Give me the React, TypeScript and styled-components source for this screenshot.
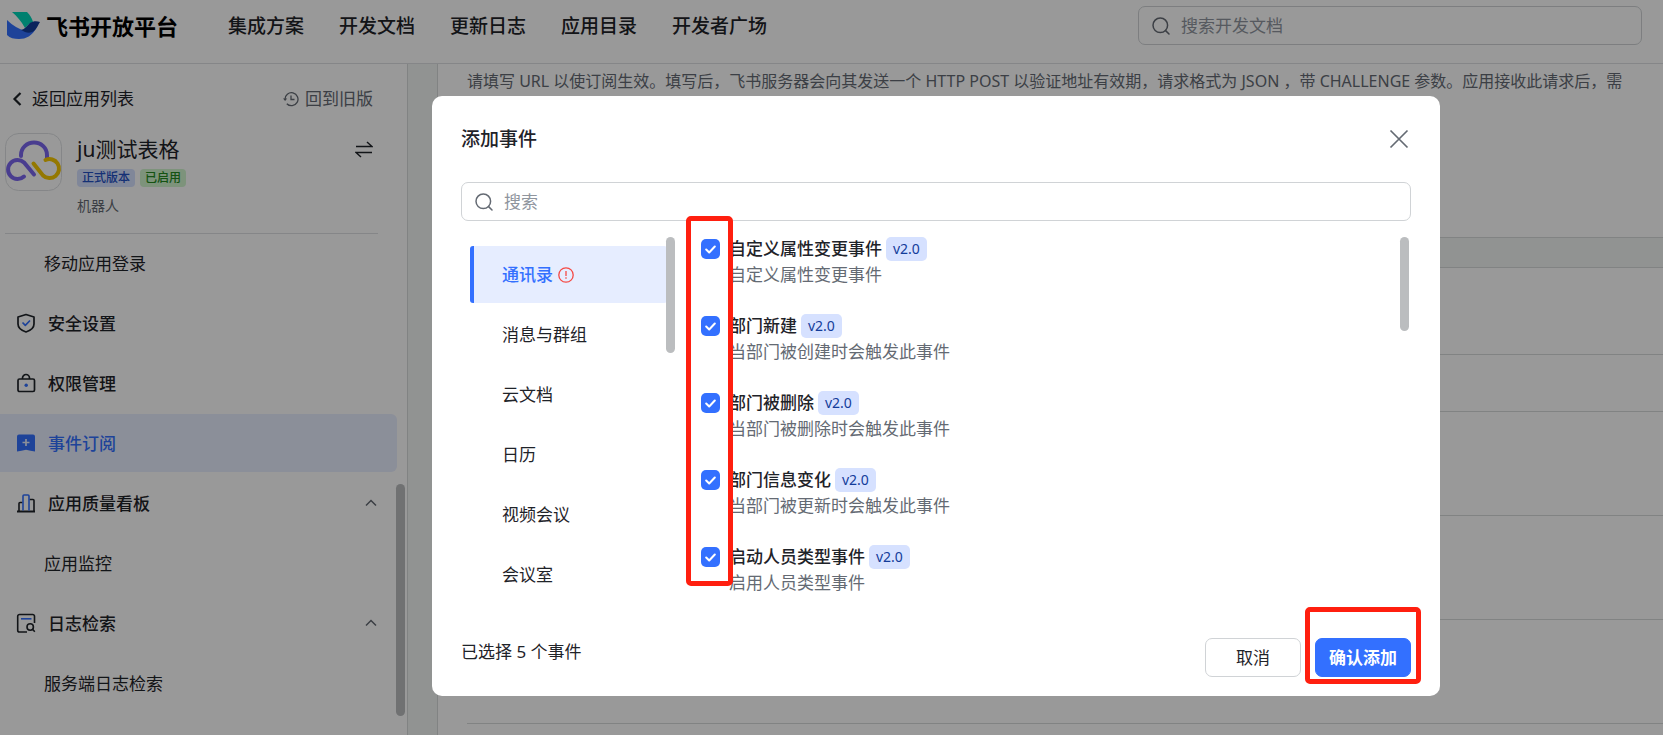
import React from "react";
import styled, { createGlobalStyle, css } from "styled-components";

const GlobalStyle = createGlobalStyle`
  *, *::before, *::after { box-sizing: border-box; }
  body {
    margin: 0;
    background: #fff;
    color: #1f2329;
    font-family: "Noto Sans", "Noto Sans CJK SC", sans-serif;
    font-size: 17px;
    line-height: 26px;
  }
  button, input { font: inherit; color: inherit; }
  button { cursor: pointer; }
  a { color: inherit; text-decoration: none; }
  h1, h2, p, ul { margin: 0; padding: 0; }
  ul { list-style: none; }
  svg { display: block; flex: none; }
`;

const Page = styled.div`
  display: flex;
  flex-direction: column;
  height: 100vh;
  overflow: hidden;
`;

/* ---------- top bar ---------- */

const TopBar = styled.header`
  display: flex;
  align-items: center;
  flex: none;
  height: 64px;
  padding: 0 21px 12px 7px;
  border-bottom: 1px solid #dee0e3;
`;

const Brand = styled.a`
  display: flex;
  align-items: center;
  gap: 6px;
  width: 221px;
  color: #000;
  font-size: 22px;
  font-weight: 700;
  white-space: nowrap;
`;

const TopNav = styled.nav`
  display: flex;
  gap: 35px;
  font-size: 19px;
  font-weight: 500;
  white-space: nowrap;
`;

const SearchField = styled.label<{ $wide?: boolean }>`
  display: flex;
  align-items: center;
  gap: 11px;
  height: 39px;
  padding: 0 13px;
  border: 1px solid #d0d3d6;
  border-radius: 7px;
  color: #646a73;
  ${({ $wide }) => ($wide ? css`width: 100%;` : css`width: 504px; margin-left: auto;`)}

  input {
    flex: 1;
    min-width: 0;
    padding: 0;
    border: 0;
    outline: 0;
    background: none;
    color: #1f2329;
  }
  input::placeholder { color: #8f959e; opacity: 1; }
`;

/* ---------- sidebar ---------- */

const Body = styled.div`
  display: flex;
  flex: 1;
  min-height: 0;
  background: #f2f5f4;
`;

const Sidebar = styled.aside`
  position: relative;
  flex: none;
  width: 408px;
  overflow: hidden;
  border-right: 1px solid #d8dbda;
  background: #fff;
`;

const BackRow = styled.div`
  display: flex;
  justify-content: space-between;
  padding: 22px 34px 0 12px;
`;

const IconLink = styled.a<{ $muted?: boolean }>`
  display: flex;
  align-items: center;
  gap: ${({ $muted }) => ($muted ? 6 : 10)}px;
  color: ${({ $muted }) => ($muted ? "#646a73" : "#1f2329")};
`;

const AppCard = styled.section`
  display: flex;
  align-items: flex-start;
  gap: 15px;
  margin: 21px 29px 0 5px;
  padding-bottom: 17px;
  border-bottom: 1px solid #dee0e3;
`;

const AppInfo = styled.div`
  flex: 1;
  padding-top: 2px;
`;

const AppName = styled.h1`
  font-size: 21px;
  font-weight: 400;
  line-height: 28px;
`;

const Tags = styled.div`
  display: flex;
  gap: 5px;
  margin: 6px 0 9px;
`;

const Tag = styled.span<{ $tone: "blue" | "green" }>`
  height: 18px;
  padding: 0 5px;
  border-radius: 4px;
  font-size: 12px;
  font-weight: 500;
  line-height: 18px;
  background: ${({ $tone }) => ($tone === "blue" ? "#d6e1ff" : "#d0f5ce")};
  color: ${({ $tone }) => ($tone === "blue" ? "#2450c4" : "#238a1e")};
`;

const AppKind = styled.p`
  color: #646a73;
  font-size: 14px;
  line-height: 20px;
`;

const SwapButton = styled.button`
  margin: 8px 5px 0 0;
  padding: 0;
  border: 0;
  background: none;
`;

const Menu = styled.ul`
  display: flex;
  flex-direction: column;
  gap: 2px;
  width: 397px;
`;

const MenuLink = styled.a<{ $child?: boolean; $active?: boolean }>`
  display: flex;
  align-items: center;
  gap: 12px;
  height: 58px;
  padding: 0 20px 0 ${({ $child }) => ($child ? 44 : 16)}px;
  border-radius: 0 6px 6px 0;
  font-weight: ${({ $child }) => ($child ? 400 : 500)};
  ${({ $active }) => $active && css`background: #e8eeff; color: #3370ff;`}

  span { flex: 1; padding-top: 2px; }
`;

const Thumb = styled.div<{ $top: number; $right: number; $height: number }>`
  position: absolute;
  top: ${({ $top }) => $top}px;
  right: ${({ $right }) => $right}px;
  width: 9px;
  height: ${({ $height }) => $height}px;
  border-radius: 5px;
  background: #bbbdbf;
`;

/* ---------- page content behind the dialog ---------- */

const Content = styled.main`
  display: flex;
  flex-direction: column;
  flex: 1;
  gap: 29px;
  min-width: 0;
  margin-left: 29px;
  overflow: hidden;
`;

const Panel = styled.section<{ $grow?: boolean }>`
  flex: ${({ $grow }) => ($grow ? "1 0 auto" : "none")};
  min-height: 174px;
  padding: 4px 0 0 29px;
  border: 1px solid #d8dbda;
  border-width: ${({ $grow }) => ($grow ? "1px 0 0 1px" : "0 0 1px 1px")};
  background: #fff;
`;

const Hint = styled.p`
  color: #646a73;
  font-size: 16px;
  white-space: nowrap;
`;

const Block = styled.div<{ $size: "s" | "m" | "l" }>`
  height: ${({ $size }) => ({ s: 57, m: 83, l: 104 })[$size]}px;
  border-bottom: 1px solid #d8dbda;
`;

/* ---------- dialog ---------- */

const Backdrop = styled.div`
  position: fixed;
  inset: 0;
  display: flex;
  align-items: flex-start;
  padding: 96px 223px 0 432px;
  background: rgba(0, 0, 0, 0.4);
`;

const Dialog = styled.div`
  flex: 1;
  min-width: 0;
  padding: 30px 29px 19px;
  border-radius: 10px;
  background: #fff;
`;

const DialogHead = styled.div`
  display: flex;
  align-items: center;
  justify-content: space-between;
  margin-bottom: 30px;
`;

const DialogTitle = styled.h2`
  font-size: 19px;
  font-weight: 500;
`;

const CloseButton = styled.button`
  padding: 0 2px;
  border: 0;
  background: none;
  color: #646a73;
`;

const Columns = styled.div`
  display: flex;
  height: 374px;
  margin-top: 16px;
`;

const CategoryColumn = styled.div`
  position: relative;
  flex: none;
  width: 214px;
  padding: 9px 8px 0 9px;
  overflow: hidden;
`;

const Category = styled.button<{ $active?: boolean }>`
  display: flex;
  align-items: center;
  gap: 5px;
  width: 100%;
  height: 57px;
  margin-bottom: 3px;
  padding: 1px 0 0 28px;
  border: 0;
  border-left: 4px solid ${({ $active }) => ($active ? "#3370ff" : "transparent")};
  border-radius: 3px;
  background: ${({ $active }) => ($active ? "#e6edff" : "none")};
  color: ${({ $active }) => ($active ? "#3370ff" : "#1f2329")};
  font-weight: ${({ $active }) => ($active ? 500 : 400)};
`;

const EventColumn = styled.div`
  position: relative;
  flex: 1;
  min-width: 0;
`;

const EventList = styled.ul`
  height: 100%;
  padding-left: 26px;
  overflow: hidden;
`;

const EventRow = styled.li`
  height: 77px;
`;

const EventLabel = styled.label`
  display: grid;
  grid-template-columns: 19px auto auto 1fr;
  align-items: center;
  height: 24px;
  line-height: 24px;
`;

const Check = styled.span`
  display: grid;
  width: 19px;
  height: 20px;
  border-radius: 5px;
  background: #3370ff;
  place-items: center;

  input, svg { grid-area: 1 / 1; }
  input { width: 19px; height: 20px; margin: 0; appearance: none; }
  svg { pointer-events: none; }
`;

const EventName = styled.span`
  margin-left: 9px;
  font-weight: 500;
`;

const Version = styled.span`
  height: 24px;
  margin-left: 4px;
  padding: 0 7px;
  border-radius: 5px;
  background: #d6e1ff;
  color: #133c9a;
  font-size: 14px;
  line-height: 24px;
`;

const EventNote = styled.p`
  margin-left: 28px;
  color: #646a73;
  line-height: 28px;
`;

const Highlight = styled.div<{ $for: "checks" | "confirm" }>`
  position: absolute;
  border: 5px solid #ff1f0f;
  border-radius: 5px;
  pointer-events: none;
  ${({ $for }) =>
    $for === "checks"
      ? css`top: -21px; left: 11px; width: 47px; height: 370px;`
      : css`inset: -31px -10px -7px;`}
`;

const DialogFoot = styled.div`
  display: flex;
  align-items: flex-start;
  gap: 14px;
  margin-top: 27px;
`;

const Count = styled.p`
  flex: 1;
  line-height: 28px;
`;

const ButtonSlot = styled.div`
  position: relative;
`;

const Button = styled.button<{ $primary?: boolean }>`
  width: 96px;
  height: 39px;
  padding: 0;
  border: 1px solid ${({ $primary }) => ($primary ? "#3370ff" : "#d0d3d6")};
  border-radius: 7px;
  background: ${({ $primary }) => ($primary ? "#3370ff" : "#fff")};
  color: ${({ $primary }) => ($primary ? "#fff" : "#1f2329")};
  font-weight: ${({ $primary }) => ($primary ? 700 : 400)};
`;

/* ---------- drawings ---------- */

const BrandMark = () => (
  <svg width="33" height="28" viewBox="0 0 33 28">
    <path d="M5 0h15c3 3 5 6 6 10-3 1-5 3-8 6C14 9 10 4 5 0z" fill="#00d6b9" />
    <path d="M0 8c6 6 12 9 18 11 4 1 8 0 12-4-5 9-11 12-18 12-5 0-9-1-12-4z" fill="#3370ff" />
    <path d="M14 18c4-1 6-4 9-7 3-2 7-2 10-1-2 3-3 6-5 8-4 4-9 3-14 0z" fill="#133c9a" />
  </svg>
);

const SearchIcon = () => (
  <svg width="18" height="18" viewBox="0 0 18 18" fill="none" stroke="currentColor" strokeWidth="1.5" strokeLinecap="round">
    <circle cx="8.3" cy="8.3" r="7.3" />
    <path d="M13.6 13.6 17 17" />
  </svg>
);

const BackIcon = () => (
  <svg width="10" height="14" viewBox="0 0 10 14" fill="none" stroke="currentColor" strokeWidth="2.2">
    <path d="M8.5 1 2.5 7l6 6" />
  </svg>
);

const HistoryIcon = () => (
  <svg width="16" height="16" viewBox="0 0 16 16" fill="none" stroke="currentColor" strokeWidth="1.3">
    <path d="M2 8.500a6.500 6.500 0 1 1 1.800 4.200" />
    <path d="M8 4.500V8.500h3.500" />
    <path d="M0 7.500h4.200L2.100 10z" fill="currentColor" stroke="none" />
  </svg>
);

const AppIcon = () => (
  <svg width="57" height="58" viewBox="0 0 57 58" fill="none" strokeWidth="4" strokeLinecap="round">
    <rect x=".5" y=".5" width="56" height="57" rx="13" stroke="#dee0e3" strokeWidth="1" />
    <path d="M16 23v-1a13 12.500 0 0 1 26 0v3" stroke="#7b67ee" />
    <path d="M29 41.500 19 29.500a9.500 9.500 0 1 0 0 14" stroke="#7b67ee" />
    <path d="m28.500 30.500 9.500 12a9.500 9.500 0 1 0 2.500-15.500" stroke="#f7c800" />
  </svg>
);

const SwapIcon = () => (
  <svg width="18" height="17" viewBox="0 0 18 17" fill="none" stroke="#1f2329" strokeWidth="1.5">
    <path d="M1 5.500h16L12 1M17 11.500H1l5 4.500" />
  </svg>
);

const ShieldIcon = () => (
  <svg width="20" height="20" viewBox="0 0 20 20" fill="none" stroke="#1f2329" strokeWidth="1.7" strokeLinejoin="round">
    <path d="M10 1.500 18 4v7c0 4-3.500 6.500-8 8-4.500-1.500-8-4-8-8V4z" />
    <path d="m6.500 9.500 2.800 2.800L14 7.500" stroke="#3370ff" />
  </svg>
);

const LockIcon = () => (
  <svg width="20" height="20" viewBox="0 0 20 20" fill="none" stroke="#1f2329" strokeWidth="1.7">
    <rect x="2" y="6" width="16.5" height="12.5" rx="1.5" />
    <path d="M6.500 6V5a3.500 3.500 0 0 1 7 0v1" />
    <circle cx="10.2" cy="12.2" r="1.7" fill="#3370ff" stroke="none" />
  </svg>
);

const EventIcon = () => (
  <svg width="20" height="20" viewBox="0 0 20 20">
    <path d="M3 1.500h14a2 2 0 0 1 2 2v15l-4.500-.8-4.500-.9-4.500.9-4.500.8v-15a2 2 0 0 1 2-2z" fill="#3370ff" />
    <path d="M10 6v7M6.500 9.500h7" stroke="#e8eeff" strokeWidth="1.7" />
  </svg>
);

const ChartIcon = () => (
  <svg width="20" height="20" viewBox="0 0 20 20" fill="none" stroke="#1f2329" strokeWidth="1.6">
    <path d="M1 18.500h18" strokeWidth="2" />
    <path d="M3 18V10.500a1 1 0 0 1 1-1h2.500M13.500 6.500H17a1 1 0 0 1 1 1V18" />
    <path d="M7 17.500V3a1 1 0 0 1 1-1h4a1 1 0 0 1 1 1v14.500" stroke="#3370ff" />
  </svg>
);

const LogIcon = () => (
  <svg width="20" height="20" viewBox="0 0 20 20" fill="none" stroke="#1f2329" strokeWidth="1.6">
    <path d="M11 19H3.500A1.800 1.800 0 0 1 1.700 17.200V3.300A1.800 1.800 0 0 1 3.500 1.500h13.200a1.800 1.800 0 0 1 1.800 1.800V10" />
    <path d="M5 5.800h10.500" stroke="#3370ff" />
    <circle cx="14.2" cy="14" r="3.2" />
    <path d="m16.500 16.300 2.300 2.500" />
  </svg>
);

const CollapseIcon = () => (
  <svg width="12" height="8" viewBox="0 0 12 8" fill="none" stroke="#646a73" strokeWidth="1.5">
    <path d="M1 6.500 6 1.500l5 5" />
  </svg>
);

const CloseIcon = () => (
  <svg width="20" height="20" viewBox="0 0 20 20" fill="none" stroke="currentColor" strokeWidth="1.7">
    <path d="m1.500 1.500 17 17M18.500 1.500l-17 17" />
  </svg>
);

const AlertIcon = () => (
  <svg width="16" height="16" viewBox="0 0 16 16" fill="none" stroke="#f54a45" strokeWidth="1.3">
    <circle cx="8" cy="8" r="7.2" />
    <path d="M8 4v5M8 10.300v1.500" />
  </svg>
);

const TickIcon = () => (
  <svg width="11" height="9" viewBox="0 0 11 9" fill="none" stroke="#fff" strokeWidth="2" strokeLinecap="round" strokeLinejoin="round">
    <path d="M1.200 4.500 4.200 7.500 9.800 1.500" />
  </svg>
);

/* ---------- data ---------- */

const topLinks = ["集成方案", "开发文档", "更新日志", "应用目录", "开发者广场"];

type Item = { label: string; icon?: React.ReactNode; active?: boolean; group?: boolean };

const menu: Item[] = [
  { label: "移动应用登录" },
  { label: "安全设置", icon: <ShieldIcon /> },
  { label: "权限管理", icon: <LockIcon /> },
  { label: "事件订阅", icon: <EventIcon />, active: true },
  { label: "应用质量看板", icon: <ChartIcon />, group: true },
  { label: "应用监控" },
  { label: "日志检索", icon: <LogIcon />, group: true },
  { label: "服务端日志检索" },
];

const categories = ["通讯录", "消息与群组", "云文档", "日历", "视频会议", "会议室"];

const events = [
  ["自定义属性变更事件", "自定义属性变更事件"],
  ["部门新建", "当部门被创建时会触发此事件"],
  ["部门被删除", "当部门被删除时会触发此事件"],
  ["部门信息变化", "当部门被更新时会触发此事件"],
  ["启动人员类型事件", "启用人员类型事件"],
];

export default function App() {
  return (
    <>
      <GlobalStyle />
      <Page lang="zh-CN">
        <TopBar>
          <Brand href="#">
            <BrandMark />
            飞书开放平台
          </Brand>
          <TopNav>
            {topLinks.map((t) => (
              <a key={t} href="#">{t}</a>
            ))}
          </TopNav>
          <SearchField>
            <SearchIcon />
            <input type="text" placeholder="搜索开发文档" aria-label="搜索开发文档" />
          </SearchField>
        </TopBar>

        <Body>
          <Sidebar>
            <BackRow>
              <IconLink href="#"><BackIcon />返回应用列表</IconLink>
              <IconLink href="#" $muted><HistoryIcon />回到旧版</IconLink>
            </BackRow>
            <AppCard>
              <AppIcon />
              <AppInfo>
                <AppName>ju测试表格</AppName>
                <Tags>
                  <Tag $tone="blue">正式版本</Tag>
                  <Tag $tone="green">已启用</Tag>
                </Tags>
                <AppKind>机器人</AppKind>
              </AppInfo>
              <SwapButton aria-label="切换应用"><SwapIcon /></SwapButton>
            </AppCard>
            <Menu>
              {menu.map((m) => (
                <li key={m.label}>
                  <MenuLink href="#" $child={!m.icon} $active={m.active}>
                    {m.icon}
                    <span>{m.label}</span>
                    {m.group && <CollapseIcon />}
                  </MenuLink>
                </li>
              ))}
            </Menu>
            <Thumb $top={420} $right={2} $height={232} />
          </Sidebar>

          <Content>
            <Panel>
              <Hint>
                请填写 URL 以使订阅生效。填写后，飞书服务器会向其发送一个 HTTP POST 以验证地址有效期，请求格式为 JSON ，带 CHALLENGE 参数。应用接收此请求后，需
              </Hint>
            </Panel>
            <Panel $grow>
              <Block $size="m" />
              <Block $size="s" />
              <Block $size="l" />
              <Block $size="l" />
              <Block $size="l" />
            </Panel>
          </Content>
        </Body>
      </Page>

      <Backdrop>
        <Dialog role="dialog" aria-modal="true" aria-labelledby="dialog-title">
          <DialogHead>
            <DialogTitle id="dialog-title">添加事件</DialogTitle>
            <CloseButton aria-label="关闭"><CloseIcon /></CloseButton>
          </DialogHead>
          <SearchField $wide>
            <SearchIcon />
            <input type="text" placeholder="搜索" aria-label="搜索" />
          </SearchField>
          <Columns>
            <CategoryColumn>
              {categories.map((c, i) => (
                <Category key={c} type="button" $active={i === 0}>
                  {c}
                  {i === 0 && <AlertIcon />}
                </Category>
              ))}
              <Thumb $top={0} $right={0} $height={116} />
            </CategoryColumn>
            <EventColumn>
              <EventList>
                {events.map(([name, note]) => (
                  <EventRow key={name}>
                    <EventLabel>
                      <Check>
                        <input type="checkbox" defaultChecked />
                        <TickIcon />
                      </Check>
                      <EventName>{name}</EventName>
                      <Version>v2.0</Version>
                    </EventLabel>
                    <EventNote>{note}</EventNote>
                  </EventRow>
                ))}
              </EventList>
              <Thumb $top={0} $right={2} $height={94} />
              <Highlight $for="checks" />
            </EventColumn>
          </Columns>
          <DialogFoot>
            <Count>已选择 5 个事件</Count>
            <Button type="button">取消</Button>
            <ButtonSlot>
              <Button type="button" $primary>确认添加</Button>
              <Highlight $for="confirm" />
            </ButtonSlot>
          </DialogFoot>
        </Dialog>
      </Backdrop>
    </>
  );
}
